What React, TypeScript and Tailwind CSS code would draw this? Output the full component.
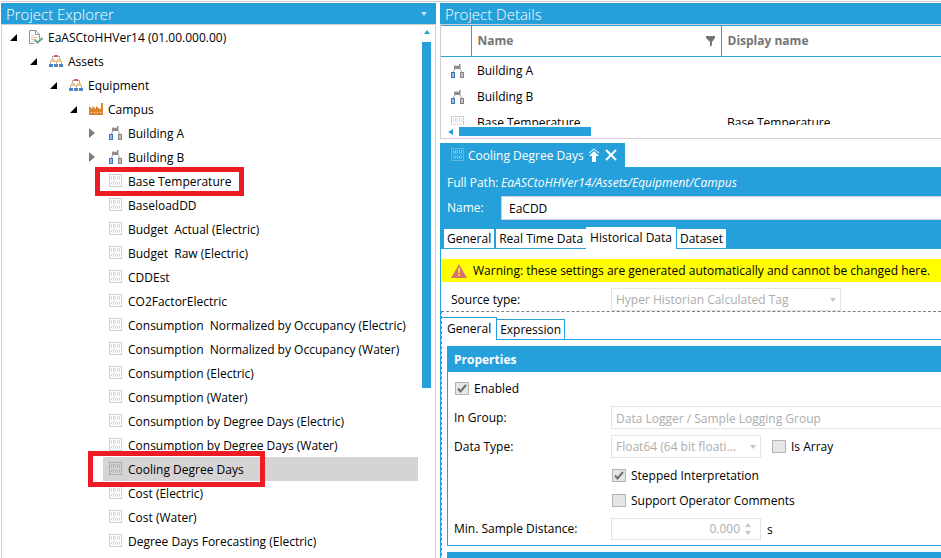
import { useState } from 'react';
import type { ReactNode } from 'react';
import clsx from 'clsx';

type IconName = 'project' | 'assets' | 'plant' | 'building' | 'tag';

type Node = {
  label: string;
  icon: IconName;
  open?: boolean;
  mark?: string;
  children?: Node[];
};

const tag = (label: string, mark?: string): Node => ({ label, icon: 'tag', mark });

const TREE: Node = {
  label: 'EaASCtoHHVer14 (01.00.000.00)',
  icon: 'project',
  open: true,
  children: [
    {
      label: 'Assets',
      icon: 'assets',
      open: true,
      children: [
        {
          label: 'Equipment',
          icon: 'assets',
          open: true,
          children: [
            {
              label: 'Campus',
              icon: 'plant',
              open: true,
              children: [
                { label: 'Building A', icon: 'building', children: [] },
                { label: 'Building B', icon: 'building', children: [] },
                tag('Base Temperature', '-left-[7px] -top-0.5 -bottom-[3px] w-[149px]'),
                tag('BaseloadDD'),
                tag('Budget  Actual (Electric)'),
                tag('Budget  Raw (Electric)'),
                tag('CDDEst'),
                tag('CO2FactorElectric'),
                tag('Consumption  Normalized by Occupancy (Electric)'),
                tag('Consumption  Normalized by Occupancy (Water)'),
                tag('Consumption (Electric)'),
                tag('Consumption (Water)'),
                tag('Consumption by Degree Days (Electric)'),
                tag('Consumption by Degree Days (Water)'),
                tag('Cooling Degree Days', '-left-3.5 -top-1.5 -bottom-1.5 w-[177px]'),
                tag('Cost (Electric)'),
                tag('Cost (Water)'),
                tag('Degree Days Forecasting (Electric)'),
              ],
            },
          ],
        },
      ],
    },
  ],
};

const DETAILS: { icon: IconName; name: string; display: string }[] = [
  { icon: 'building', name: 'Building A', display: '' },
  { icon: 'building', name: 'Building B', display: '' },
  { icon: 'tag', name: 'Base Temperature', display: 'Base Temperature' },
];

const TABS = ['General', 'Real Time Data', 'Historical Data', 'Dataset'];

function TagIcon({ frame = '#cfcfcf', bits = '#cfdcd9' }: { frame?: string; bits?: string }) {
  return (
    <svg width="14" height="14" viewBox="0 0 14 14" fill="none" className="shrink-0" shapeRendering="crispEdges">
      <rect x="0.5" y="0.5" width="12" height="12" stroke={frame} />
      <path
        stroke={bits}
        d="M2.5 2v4M4 2.5h2M4 5.5h2M4.5 3v2M6.5 3v2M8.5 2v4M10.5 2v4M3 7.5h1M3 10.5h1M2.5 8v2M4.5 8v2M6.5 7v4M9 7.5h1M9 10.5h1M8.5 8v2M10.5 8v2"
      />
    </svg>
  );
}

function NodeIcon({ name, dark }: { name: IconName; dark?: boolean }) {
  switch (name) {
    case 'tag':
      return dark ? <TagIcon frame="#adadad" bits="#a9b7b4" /> : <TagIcon />;
    case 'building':
      return (
        <svg width="14" height="14" viewBox="0 0 14 14" className="shrink-0">
          <path d="M3 5V1l1.700 1.500V1l1.700 1.500V1L8 2.500V0h1.500v5z" fill="#8a8a8a" />
          <path d="M4.500 4.500L2 8M8.500 4.500L11 8" stroke="#a5a5a5" fill="none" />
          <path d="M0 8h4v6H0zM1 9.500h2v1H1zM1 11.500h2v1H1z" fill="#3c78bd" fillRule="evenodd" />
          <path d="M9 8h4v6H9zM10 9.500h2v1h-2zM10 11.500h2v1h-2z" fill="#858585" fillRule="evenodd" />
        </svg>
      );
    case 'plant':
      return (
        <svg width="14" height="14" viewBox="0 0 14 14" className="shrink-0">
          <path
            d="M0 4l3.500 3V4L7 7V4l3.500 3L12 6V1h2v12H0zM2 10v1h1v-1zM5 10v1h1v-1zM8 10v1h1v-1zM11 10v1h1v-1z"
            fill="#d9852c"
            fillRule="evenodd"
          />
        </svg>
      );
    case 'assets':
      return (
        <svg width="14" height="14" viewBox="0 0 14 14" fill="none" className="shrink-0" shapeRendering="crispEdges">
          <path d="M3.500 6V2.500h7V6M1.500 10V7.500h11V10M7 8v2" stroke="#b5b0a8" />
          <path d="M5 1h4v2H5z" fill="#d85f63" />
          <path d="M2 5h4v3H2zM8 5h4v3H8z" fill="#f2c682" />
          <path d="M0 10h4v3H0zM5 10h4v3H5zM10 10h4v3h-4z" fill="#4a86c8" />
        </svg>
      );
    default:
      return (
        <svg width="14" height="14" viewBox="0 0 14 14" fill="none" className="shrink-0">
          <path d="M5 13.500H.5V.5h6.500l3.500 4V9M6.500 .5v4h4" stroke="#929292" />
          <path d="M2 5.500h3M2 7.500h7M2 9.500h4M2 11.500h3" stroke="#e3cda4" />
          <path d="M5.500 9.500l3 3L13.500 8" stroke="#6aa58e" strokeWidth="2" />
        </svg>
      );
  }
}

function Triangle({ dir, className }: { dir: 'up' | 'down' | 'left'; className?: string }) {
  const d = { up: 'M0 4L3 0l3 4z', down: 'M0 0h6L3 4z', left: 'M5 0v6L0 3z' }[dir];
  return (
    <svg width="6" height={dir === 'left' ? 6 : 4} className={clsx('shrink-0 fill-current', className)}>
      <path d={d} />
    </svg>
  );
}

function TreeItem({
  node,
  selected,
  onSelect,
}: {
  node: Node;
  selected: string;
  onSelect: (label: string) => void;
}) {
  const [open, setOpen] = useState(!!node.open);
  const active = selected === node.label;

  return (
    <li>
      <div className="flex h-6 items-stretch">
        {node.children ? (
          <button
            aria-label={`Toggle ${node.label}`}
            onClick={() => setOpen(!open)}
            className="flex w-4 shrink-0 items-center justify-center pr-0.5"
          >
            <svg width="8" height="10">
              {open ? <path d="M8 2v7H1z" fill="#000" /> : <path d="M0 0v10l6-5z" fill="#7d7d7d" />}
            </svg>
          </button>
        ) : (
          <span className="w-4 shrink-0" />
        )}
        <div className="relative flex grow">
          <button
            onClick={() => onSelect(node.label)}
            className={clsx('ml-px flex grow items-center gap-[5px] pl-1.5 text-left', active && 'bg-[#d5d3d4]')}
          >
            <NodeIcon name={node.icon} dark={active} />
            <span className="whitespace-pre pt-0.5">{node.label}</span>
          </button>
          {node.mark && <span className={clsx('pointer-events-none absolute z-10 border-5 border-[#ed1c24]', node.mark)} />}
        </div>
      </div>
      {open && !!node.children?.length && (
        <ul className="pl-5">
          {node.children.map((child) => (
            <TreeItem key={child.label} node={child} selected={selected} onSelect={onSelect} />
          ))}
        </ul>
      )}
    </li>
  );
}

function PanelTitle({ children }: { children: ReactNode }) {
  return (
    <div className="flex h-[21px] shrink-0 items-center justify-between bg-[#26a0da] px-[5px] text-white">{children}</div>
  );
}

function CheckBox({ label, checked }: { label: string; checked?: boolean }) {
  return (
    <label className="flex items-center gap-[5px]">
      <span className="relative flex">
        <input
          type="checkbox"
          defaultChecked={checked}
          disabled
          className="peer h-[13px] w-3.5 appearance-none border border-[#b4b4b4] bg-[#e6e6e6]"
        />
        <svg
          width="14"
          height="13"
          fill="none"
          className="pointer-events-none absolute inset-0 hidden stroke-[#6e6e6e] stroke-2 peer-checked:block"
        >
          <path d="M3 6.500l2.500 3L11 3" />
        </svg>
      </span>
      {label}
    </label>
  );
}

function DisabledSelect({ id, value, className }: { id: string; value: string; className: string }) {
  return (
    <div className={clsx('relative', className)}>
      <select
        id={id}
        disabled
        className="h-[23px] w-full appearance-none truncate border border-[#e4e4e4] bg-white pl-1 pr-5 text-[#adadad] opacity-100"
      >
        <option>{value}</option>
      </select>
      <Triangle dir="down" className="pointer-events-none absolute right-[5px] top-2.5 text-[#c6c6c6]" />
    </div>
  );
}

function Explorer() {
  const [selected, setSelected] = useState('Cooling Degree Days');
  return (
    <section className="flex w-[435px] shrink-0 flex-col">
      <PanelTitle>
        <h2 className="text-[15px] font-light leading-5">Project Explorer</h2>
        <button aria-label="Panel menu" className="px-1">
          <Triangle dir="down" className="text-[#c5e6f6]" />
        </button>
      </PanelTitle>
      <div className="flex min-h-0 grow border border-b-0 border-[#cfcfcf] pl-1">
        <ul className="min-w-0 grow">
          <TreeItem node={TREE} selected={selected} onSelect={setSelected} />
        </ul>
        <div className="mx-1 flex w-[9px] shrink-0 flex-col items-center gap-2 pt-[5px] text-[#26a0da]">
          <Triangle dir="up" />
          <div className="h-[346px] w-full bg-[#26a0da]" />
        </div>
      </div>
    </section>
  );
}

function Details() {
  return (
    <section className="shrink-0">
      <PanelTitle>
        <h2 className="text-[15px] font-light leading-5">Project Details</h2>
      </PanelTitle>
      <div className="border border-r-0 border-[#cfcfcf]">
        <div className="h-[100px] overflow-hidden">
          <table className="w-full table-fixed border-collapse text-left">
            <thead className="text-[#757575]">
              <tr className="h-[31px] border-y border-[#26a0da]">
                <th className="w-[30px] border-r border-[#26a0da]" aria-label="Type" />
                <th className="w-[250px] border-r border-[#26a0da] px-1.5">
                  <div className="flex items-center justify-between">
                    Name
                    <svg width="9" height="11" fill="#757575">
                      <path d="M0 0h9v2L6 6v3l-2 2V6L0 2z" />
                    </svg>
                  </div>
                </th>
                <th className="px-1.5">Display name</th>
              </tr>
            </thead>
            <tbody>
              {DETAILS.map((row) => (
                <tr key={row.name} className="h-[26px]">
                  <td className="pl-2.5 pt-0.5">
                    <NodeIcon name={row.icon} />
                  </td>
                  <td className="px-1.5 pt-[3px]">{row.name}</td>
                  <td className="px-1.5 pt-[3px]">{row.display}</td>
                </tr>
              ))}
            </tbody>
          </table>
        </div>
        <div className="flex h-[13px] items-center gap-[5px] pl-[7px] text-[#26a0da]">
          <Triangle dir="left" />
          <div className="h-[9px] w-[132px] bg-[#26a0da]" />
        </div>
      </div>
    </section>
  );
}

function Properties() {
  return (
    <div className="border border-r-0 border-[#26a0da]">
      <h3 className="flex h-[25px] items-center bg-[#26a0da] px-1.5 font-bold text-white">Properties</h3>
      <div className="flex flex-col pb-[5px] pl-1.5 pt-1">
        <div className="flex h-[25px] items-center pl-px">
          <CheckBox label="Enabled" checked />
        </div>
        <div className="mt-[5px] flex items-center">
          <label htmlFor="group" className="w-[157px] shrink-0">
            In Group:
          </label>
          <input
            id="group"
            disabled
            defaultValue="Data Logger / Sample Logging Group"
            className="h-[23px] min-w-0 grow border border-r-0 border-[#e4e4e4] px-1 pt-0.5 text-[#adadad]"
          />
        </div>
        <div className="mt-1.5 flex items-center">
          <label htmlFor="datatype" className="w-[157px] shrink-0">
            Data Type:
          </label>
          <DisabledSelect id="datatype" value="Float64 (64 bit floati..." className="mr-[11px] w-[150px]" />
          <CheckBox label="Is Array" />
        </div>
        <div className="mt-[5px] flex flex-col pl-[158px]">
          <div className="flex h-[25px] items-center">
            <CheckBox label="Stepped Interpretation" checked />
          </div>
          <div className="flex h-[25px] items-center">
            <CheckBox label="Support Operator Comments" />
          </div>
        </div>
        <div className="mt-[5px] flex items-center">
          <label htmlFor="distance" className="w-[157px] shrink-0">
            Min. Sample Distance:
          </label>
          <div className="mr-1.5 flex h-[22px] w-[150px] items-center border border-[#e4e4e4] text-[#adadad]">
            <input id="distance" disabled defaultValue="0.000" className="min-w-0 grow text-right" />
            <div className="flex w-5 shrink-0 flex-col items-center gap-1 pr-1 text-[#c6c6c6]">
              <button disabled aria-label="Increase">
                <Triangle dir="up" className="block" />
              </button>
              <button disabled aria-label="Decrease">
                <Triangle dir="down" className="block" />
              </button>
            </div>
          </div>
          <span className="pt-0.5">s</span>
        </div>
      </div>
    </div>
  );
}

function Editor() {
  const [tab, setTab] = useState('Historical Data');
  return (
    <section className="mt-1 flex min-h-0 grow flex-col">
      <div className="flex">
        <div className="flex h-6 items-center bg-[#26a0da] pl-[11px] pr-2 text-white">
          <TagIcon frame="#6cb4d3" bits="#8cc8e4" />
          <span className="ml-[3px] mr-1 pt-0.5">Cooling Degree Days</span>
          <button aria-label="Promote" className="mr-[5px]">
            <svg width="12" height="14" fill="none" className="block">
              <path d="M1 5l5-4 5 4" stroke="#fff" />
              <path d="M6 3l5 5H8v6H4V8H1z" fill="#fff" />
            </svg>
          </button>
          <button aria-label="Close">
            <svg width="12" height="12" stroke="#fff" strokeWidth="2" className="block">
              <path d="M1 1l10 10M11 1L1 11" />
            </svg>
          </button>
        </div>
      </div>
      <div className="bg-[#26a0da] pl-[7px] pt-1.5 text-white">
        <div className="flex h-5 items-center">
          <span className="w-[54px] shrink-0">Full Path:</span>
          <span className="italic">EaASCtoHHVer14/Assets/Equipment/Campus</span>
        </div>
        <div className="mt-[3px] flex items-center">
          <label htmlFor="name" className="w-[54px] shrink-0">
            Name:
          </label>
          <input
            id="name"
            defaultValue="EaCDD"
            className="h-6 min-w-0 grow border-y border-l border-[#cfcfcf] bg-white px-[7px] text-black outline-none"
          />
        </div>
        <div role="tablist" className="-ml-[3px] mt-[7px] flex items-end text-black">
          {TABS.map((t) => (
            <button
              key={t}
              role="tab"
              aria-selected={t === tab}
              onClick={() => setTab(t)}
              className={clsx(
                'bg-white',
                t === tab ? 'mr-px h-[22px] px-1' : 'mb-px h-[19px] px-[3px] first:mr-0.5',
              )}
            >
              {t}
            </button>
          ))}
        </div>
      </div>
      <div className="min-h-0 grow overflow-hidden border-l border-[#26a0da] pt-2.5">
        <div role="alert" className="flex h-[23px] items-center gap-1.5 bg-[#ffff00] pl-2.5">
          <svg width="16" height="14" className="shrink-0">
            <path d="M8 0l8 14H0z" fill="#d9736b" />
            <path d="M7 4h2v5H7zM7 10h2v2H7z" fill="#f5dc4a" />
          </svg>
          Warning: these settings are generated automatically and cannot be changed here.
        </div>
        <div className="mt-1.5 flex items-center pl-2.5">
          <label htmlFor="source" className="w-40 shrink-0">
            Source type:
          </label>
          <DisabledSelect id="source" value="Hyper Historian Calculated Tag" className="w-[230px]" />
        </div>
        <div className="border-l border-t border-dashed border-[#808080] pt-[5px]">
          <div role="tablist" className="flex h-[23px] items-end">
            <button role="tab" aria-selected="true" className="h-[23px] border-r border-t border-[#26a0da] px-[5px]">
              General
            </button>
            <button role="tab" aria-selected="false" className="h-[21px] border-y border-r border-[#26a0da] px-[3px]">
              Expression
            </button>
            <span className="grow border-b border-[#26a0da]" />
          </div>
          <div className="flex flex-col gap-1.5 pl-[5px] pt-1.5">
            <Properties />
            <div className="h-6 bg-[#26a0da]" />
          </div>
        </div>
      </div>
    </section>
  );
}

export default function App() {
  return (
    <div className="flex h-screen flex-col overflow-hidden bg-white pl-px pt-px font-['Open_Sans',sans-serif] text-[12px] leading-4 text-black">
      <div className="mb-px shrink-0 border-t border-[#cfcfcf]" />
      <div className="flex min-h-0 grow gap-1">
        <Explorer />
        <main className="flex min-w-0 grow flex-col">
          <Details />
          <Editor />
        </main>
      </div>
    </div>
  );
}
